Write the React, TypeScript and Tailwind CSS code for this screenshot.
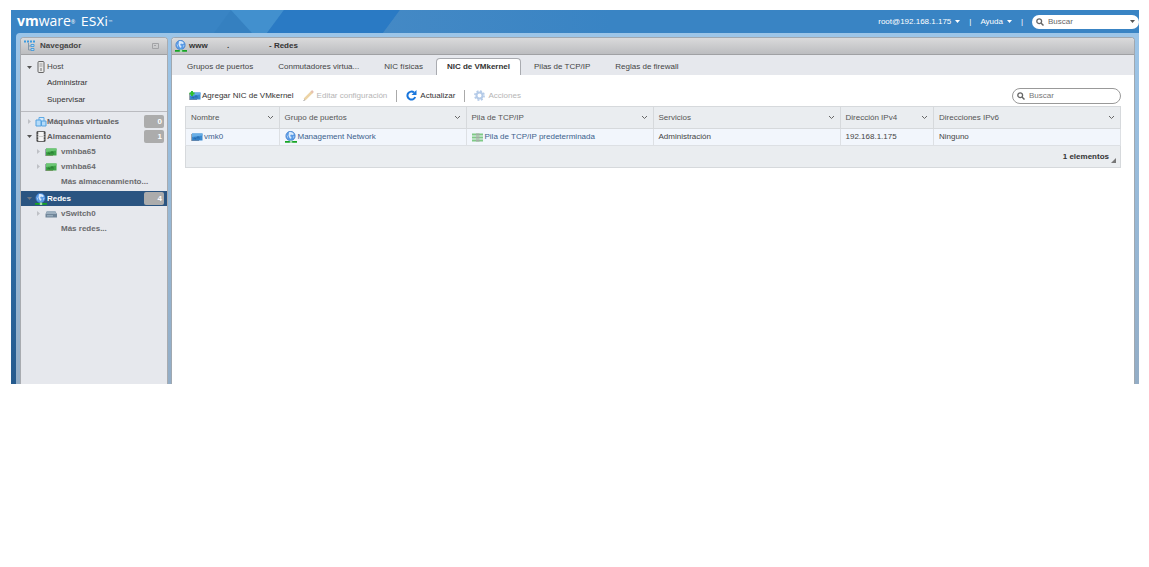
import type { ReactNode } from 'react'

// ── Icons ─────────────────────────────────────────────────────────────────────

function NicIcon({ variant = 'blue', add = false }: { variant?: 'blue' | 'green'; add?: boolean }) {
  const blue = variant === 'blue'
  return (
    <svg width="12" height="10" viewBox="0 0 12 10" className="shrink-0" aria-hidden="true">
      <path d="M1 1.500h10.500v7H1z" fill={blue ? '#3a8ad0' : '#3fa548'} />
      <path d="M1 1.500h10.500v2L1 5z" fill={blue ? '#68aee6' : '#6cc774'} />
      <path d="M3 7.500V6h1.500v1.500M6 7.500V5h2v2.500" fill="none" stroke={blue ? '#2465a8' : '#24752f'} strokeWidth=".8" />
      <path d="M1 8.500h7" stroke={blue ? '#5e86b0' : '#6f9a62'} />
      <path d="M.5 2v7" stroke="#9aa3ad" />
      {add && <path d="M3 0v5M.5 2.500h5" stroke="#2fc12f" strokeWidth="2" />}
    </svg>
  )
}

function GlobeIcon() {
  return (
    <svg width="12" height="12" viewBox="0 0 12 12" className="shrink-0" aria-hidden="true">
      <circle cx="5.5" cy="5" r="4.7" fill="#5a9be6" stroke="#3b78c8" strokeWidth=".6" />
      <path d="M4 1.200c2-.6 4 .3 5 2L7.500 4 6 3.500 5 5l1.500 1L6 8 4.500 7 3.500 4.500z" fill="#d9eafc" />
      <path d="M1.500 3.500 3 5.500l-.5 2M8 5.500l1.500-.5-1 2.500z" fill="#b4d3f6" />
      <path d="M0 10.800h12" stroke="#16a524" strokeWidth="1.800" />
      <path d="M4.800 9.500h2.400V12H4.800z" fill="#a5dfaa" />
    </svg>
  )
}

function TreeIcon() {
  return (
    <svg width="12" height="12" viewBox="0 0 12 12" className="shrink-0" aria-hidden="true">
      <path d="M0 1.500h11" stroke="#3d9be0" strokeWidth="2" strokeDasharray="2 1" />
      <path d="M4.500 3v7H7M4.500 6H7" fill="none" stroke="#8398ab" />
      <path d="M7 4.500h3v2H7zM7 8.500h3v2H7z" fill="#b4dcf8" stroke="#3a94d8" strokeWidth=".8" />
    </svg>
  )
}

function HostIcon() {
  return (
    <svg width="8" height="12" viewBox="0 0 8 12" className="shrink-0" aria-hidden="true">
      <rect x="1" y=".5" width="6" height="11" rx="1" fill="#e8e8e8" stroke="#666" />
      <path d="M2.500 3h3M2.500 5h3" stroke="#888" strokeWidth=".8" />
      <path d="M4 7v3" stroke="#999" strokeWidth="1.500" />
    </svg>
  )
}

function VmIcon() {
  return (
    <svg width="12" height="12" viewBox="0 0 12 12" className="shrink-0" aria-hidden="true">
      <path d="M4 1.500h5V8H4z" fill="#d4eafc" stroke="#5fa9e4" />
      <path d="M1 4h5v6H1zM6.500 5H11v5H6.500z" fill="#b4dbf9" stroke="#55a2e0" />
    </svg>
  )
}

function StorageIcon() {
  return (
    <svg width="10" height="11" viewBox="0 0 10 11" className="shrink-0" aria-hidden="true">
      <path d="M1 .5h8v10H1z" fill="#f4f4f4" stroke="#666" />
      <path d="M1.500 1v9M8.500 1v9" stroke="#4a4a4a" strokeWidth="1.500" strokeDasharray="2 .6" />
      <path d="M2.500 5.500h5" stroke="#ccc" />
    </svg>
  )
}

function SwitchIcon() {
  return (
    <svg width="12" height="8" viewBox="0 0 12 8" className="shrink-0" aria-hidden="true">
      <path d="M2 1h8l2 3v3.500H.5V4z" fill="#71869a" />
      <path d="M2 1h8l1.500 3H1z" fill="#9db0c0" />
      <path d="M2 5.800h6" stroke="#a9bccb" />
    </svg>
  )
}

function StackIcon() {
  return (
    <svg width="11" height="9" viewBox="0 0 11 9" className="shrink-0" aria-hidden="true">
      <path d="M0 1.500h11M0 4.500h11M0 7.500h11" stroke="#7fca86" strokeWidth="2" />
      <path d="M4 1.500h3.500M4 4.500h3.500M4 7.500h3.500" stroke="#a3ada5" strokeWidth="2" />
    </svg>
  )
}

function PencilIcon() {
  return (
    <svg width="11" height="11" viewBox="0 0 11 11" className="shrink-0" aria-hidden="true">
      <path d="M1.500 9.500 9 2" stroke="#ecd3a5" strokeWidth="2.500" />
      <path d="M8.500 2.500 10 1" stroke="#e6c0b0" strokeWidth="2.500" />
      <path d="m.5 10.500 1.500-.7" stroke="#999" />
    </svg>
  )
}

function RefreshIcon() {
  return (
    <svg width="11" height="11" viewBox="0 0 11 11" className="shrink-0" aria-hidden="true">
      <path d="M9.200 7A4 4 0 1 1 8 2.500" fill="none" stroke="#1976dc" strokeWidth="2" />
      <path d="M10.500 0v5h-5z" fill="#1976dc" />
    </svg>
  )
}

function GearIcon() {
  return (
    <svg width="11" height="11" viewBox="0 0 11 11" className="shrink-0" aria-hidden="true">
      <circle cx="5.5" cy="5.5" r="4.6" fill="none" stroke="#b5cbe8" strokeWidth="1.600" strokeDasharray="2 1.610" />
      <circle cx="5.5" cy="5.5" r="3" fill="none" stroke="#b5cbe8" strokeWidth="2" />
    </svg>
  )
}

function SearchIcon() {
  return (
    <svg width="8" height="8" viewBox="0 0 8 8" className="shrink-0" aria-hidden="true">
      <circle cx="3.2" cy="3.2" r="2.4" fill="none" stroke="#666" strokeWidth="1.300" />
      <path d="m5 5 2.500 2.500" stroke="#666" strokeWidth="1.500" />
    </svg>
  )
}

function Caret({ color = '#555', closed = false }: { color?: string; closed?: boolean }) {
  return (
    <svg width="5" height="5" viewBox="0 0 5 5" className="shrink-0" aria-hidden="true">
      <path d={closed ? 'M1 0v5l3-2.500z' : 'M0 1h5L2.500 4z'} fill={color} />
    </svg>
  )
}

function Chevron() {
  return (
    <svg width="7" height="5" viewBox="0 0 7 5" className="shrink-0" aria-hidden="true">
      <path d="m1 1 2.500 2.500L6 1" fill="none" stroke="#666" />
    </svg>
  )
}

// ── Header ────────────────────────────────────────────────────────────────────

function Header() {
  return (
    <header className="relative flex h-[23px] items-center justify-between bg-[#3984c4] text-white">
      <svg width="600" height="23" viewBox="0 0 600 23" className="absolute left-0 top-0" aria-hidden="true">
        <defs>
          <linearGradient id="fade">
            <stop offset="0" stopColor="#4489c5" />
            <stop offset="1" stopColor="#3984c4" />
          </linearGradient>
        </defs>
        <path d="M203 23 220 0l21 23z" fill="#3580c0" />
        <path d="M220 0h53l-17 23h-15z" fill="#4290ce" />
        <path d="M273 0h116l-17 23H256z" fill="#2a7ac4" />
        <path d="M389 0h211v23H372z" fill="url(#fade)" />
      </svg>
      <div className="relative flex items-baseline gap-1.5 pl-1.5 leading-5">
        <span className="font-['Open_Sans',sans-serif] text-[14px]"><b>vm</b>ware<sup className="text-[5px]">®</sup></span>
        <span className="font-['DejaVu_Sans',sans-serif] text-[12px]">ESXi<sup className="text-[5px]">™</sup></span>
      </div>
      <div className="relative flex items-center">
        <button type="button" className="flex items-center gap-1">root@192.168.1.175 <Caret color="#fff" /></button>
        <span className="px-[9px]">|</span>
        <button type="button" className="flex items-center gap-1">Ayuda <Caret color="#fff" /></button>
        <span className="px-[9px]">|</span>
        <label className="flex h-3.5 w-[107px] items-center gap-1 rounded-full bg-white px-1">
          <SearchIcon />
          <input type="text" placeholder="Buscar" aria-label="Buscar" className="w-0 grow outline-none placeholder:text-[#666]" />
          <Caret />
        </label>
      </div>
    </header>
  )
}

// ── Navigator ─────────────────────────────────────────────────────────────────

function TreeItem({ icon, label, count, open = false, selected = false }: { icon: ReactNode; label: string; count?: number; open?: boolean; selected?: boolean }) {
  const caretColor = selected ? '#6d7783' : open ? '#555' : '#bfc1c6'
  return (
    <a
      href="#"
      className={`flex h-[15px] items-center pl-1.5 pr-[3px] font-bold ${selected ? 'bg-[#2a5481] text-white' : 'text-[#5f6063]'}`}
    >
      <Caret closed={!open} color={caretColor} />
      <span className="ml-0.5 flex w-[13px] justify-center">{icon}</span>
      <span className="grow">{label}</span>
      {count !== undefined && (
        <span className="h-[13px] w-5 rounded-xs bg-[#acacac] pr-0.5 text-right leading-[13px] text-white">{count}</span>
      )}
    </a>
  )
}

function TreeLeaf({ icon, label }: { icon?: ReactNode; label: string }) {
  return (
    <a href="#" className="flex h-[15px] items-center pl-[15px] font-bold text-[#6a6b6e]">
      <span className="w-[5px]">{icon && <Caret closed color="#bfc1c6" />}</span>
      <span className="ml-1 w-4">{icon}</span>
      <span>{label}</span>
    </a>
  )
}

function Navigator() {
  return (
    <aside className="w-[148px] shrink-0 overflow-hidden rounded-t border-x border-t border-[#a8abb0] bg-[#e6e8ed] pb-[148px]">
      <div className="flex h-[17px] items-center gap-1 border-b border-[#a0a1a4] bg-linear-to-b from-[#dadadb] to-[#bcbdc0] pl-[3px] pr-2">
        <TreeIcon />
        <h2 className="grow font-bold text-[#444]">Navegador</h2>
        <svg width="7" height="6" viewBox="0 0 7 6" aria-hidden="true">
          <path d="M.5.5h6v5h-6zM2 2.500h2" fill="none" stroke="#a2a3a6" />
        </svg>
      </div>
      <nav aria-label="Navegador">
        <div className="border-b border-[#babbc0] pb-0.5 pt-1">
          <a href="#" className="flex h-4 items-center pl-1.5 text-[#444]">
            <Caret />
            <span className="ml-0.5 flex w-[13px] justify-center"><HostIcon /></span>
            Host
          </a>
          <a href="#" className="flex h-4 items-center pl-[26px] text-[#333]">Administrar</a>
          <a href="#" className="flex h-[18px] items-center pl-[26px] text-[#333]">Supervisar</a>
        </div>
        <div className="pt-0.5">
          <TreeItem icon={<VmIcon />} label="Máquinas virtuales" count={0} />
          <TreeItem icon={<StorageIcon />} label="Almacenamiento" count={1} open />
          <TreeLeaf icon={<NicIcon variant="green" />} label="vmhba65" />
          <TreeLeaf icon={<NicIcon variant="green" />} label="vmhba64" />
          <TreeLeaf label="Más almacenamiento..." />
        </div>
        <div className="pt-0.5">
          <TreeItem icon={<GlobeIcon />} label="Redes" count={4} open selected />
          <TreeLeaf icon={<SwitchIcon />} label="vSwitch0" />
          <TreeLeaf label="Más redes..." />
        </div>
      </nav>
    </aside>
  )
}

// ── Networking panel ──────────────────────────────────────────────────────────

const TABS = ['Grupos de puertos', 'Conmutadores virtua...', 'NIC físicas', 'NIC de VMkernel', 'Pilas de TCP/IP', 'Reglas de firewall']

const COLUMNS = [
  { label: 'Nombre', width: 'w-[10%]' },
  { label: 'Grupo de puertos', width: 'w-[20%]' },
  { label: 'Pila de TCP/IP', width: 'w-[20%]' },
  { label: 'Servicios', width: 'w-[20%]' },
  { label: 'Dirección IPv4', width: 'w-[10%]' },
  { label: 'Direcciones IPv6', width: 'w-[20%]' },
]

function Toolbar() {
  return (
    <div className="flex h-[21px] items-center text-[#333]">
      <button type="button" className="ml-1 flex items-center gap-px"><NicIcon add />Agregar NIC de VMkernel</button>
      <button type="button" disabled className="ml-[9px] flex items-center gap-[3px] text-[#b5b5b5]"><PencilIcon />Editar configuración</button>
      <span className="mx-[9px] h-3 w-px bg-[#aaa]" />
      <button type="button" className="flex items-center gap-[3px]"><RefreshIcon />Actualizar</button>
      <span className="mx-[9px] h-3 w-px bg-[#aaa]" />
      <button type="button" disabled className="flex items-center gap-[3px] text-[#b5b5b5]"><GearIcon />Acciones</button>
      <label className="ml-auto flex h-4 w-[109px] items-center gap-1 rounded-full border border-[#999] px-1">
        <SearchIcon />
        <input type="text" placeholder="Buscar" aria-label="Buscar en la tabla" className="w-0 grow outline-none placeholder:text-[#777]" />
      </label>
    </div>
  )
}

function NicTable() {
  return (
    <table className="w-full table-fixed border-collapse border border-[#d6d9dc] text-left text-[#444]">
      <thead>
        <tr className="h-[22px] bg-[#eaedf0]">
          {COLUMNS.map(c => (
            <th key={c.label} className={`${c.width} border border-[#d6d9dc] px-[5px] py-0 font-normal text-[#555]`}>
              <span className="flex items-center justify-between">{c.label}<Chevron /></span>
            </th>
          ))}
        </tr>
      </thead>
      <tbody>
        <tr className="h-[17px] bg-[#f2f6fc] [&>td]:border-x [&>td]:border-[#dde0e4] [&>td]:px-[5px] [&>td]:py-0">
          <td><a href="#" className="flex items-center gap-px text-[#3b5f8c]"><NicIcon />vmk0</a></td>
          <td><a href="#" className="flex items-center gap-px text-[#3b5f8c]"><GlobeIcon />Management Network</a></td>
          <td><a href="#" className="flex items-center gap-0.5 text-[#3b5f8c]"><StackIcon />Pila de TCP/IP predeterminada</a></td>
          <td>Administración</td>
          <td>192.168.1.175</td>
          <td>Ninguno</td>
        </tr>
      </tbody>
      <tfoot>
        <tr className="h-[22px] border-t border-[#dde0e4] bg-[#eaedf0]">
          <td colSpan={6} className="px-[3px] py-0 font-bold text-[#333]">
            <span className="flex items-center justify-end gap-0.5">
              1 elementos
              <svg width="6" height="12" viewBox="0 0 6 12" aria-hidden="true">
                <path d="M5 7v5H0z" fill="#777" />
              </svg>
            </span>
          </td>
        </tr>
      </tfoot>
    </table>
  )
}

function NetworkPanel() {
  return (
    <main className="min-w-0 grow overflow-hidden rounded-t border-x border-t border-[#a0a8b0] bg-white">
      <div className="flex h-[17px] items-center border-b border-[#a0a1a4] bg-linear-to-b from-[#dadadb] to-[#bcbdc0] pl-[3px] font-bold text-[#333]">
        <GlobeIcon />
        <h1 className="ml-0.5 flex items-center">
          <span className="w-[38px]">www</span>
          <span className="w-[42px]">.</span>
          <span>- Redes</span>
        </h1>
      </div>
      <div role="tablist" className="flex h-5 items-end gap-px bg-[#e6e8ed] pl-[3px] text-[#444]">
        {TABS.map(t => (
          <button
            key={t}
            type="button"
            role="tab"
            aria-selected={t === 'NIC de VMkernel'}
            className={
              t === 'NIC de VMkernel'
                ? 'h-[17px] rounded-t border-x border-t border-[#a9abb0] bg-white px-2.5 font-bold text-[#333]'
                : 'h-[17px] px-3'
            }
          >
            {t}
          </button>
        ))}
      </div>
      <div className="px-[13px] pt-2.5">
        <Toolbar />
        <NicTable />
      </div>
    </main>
  )
}

// ── Page ──────────────────────────────────────────────────────────────────────

export default function App() {
  return (
    <div className="min-h-screen bg-white pl-[11px] pr-2.5 pt-2.5 font-['Liberation_Sans',Arial,sans-serif] text-[8px] leading-3">
      <Header />
      <div className="bg-linear-to-b from-[#3984c4] to-[#245a8e] pl-[5px]">
        <div className="flex gap-[3px] rounded-tl bg-linear-to-b from-[#9cc5e8] to-[#93adc6] px-1 pt-1">
          <Navigator />
          <NetworkPanel />
        </div>
      </div>
    </div>
  )
}
